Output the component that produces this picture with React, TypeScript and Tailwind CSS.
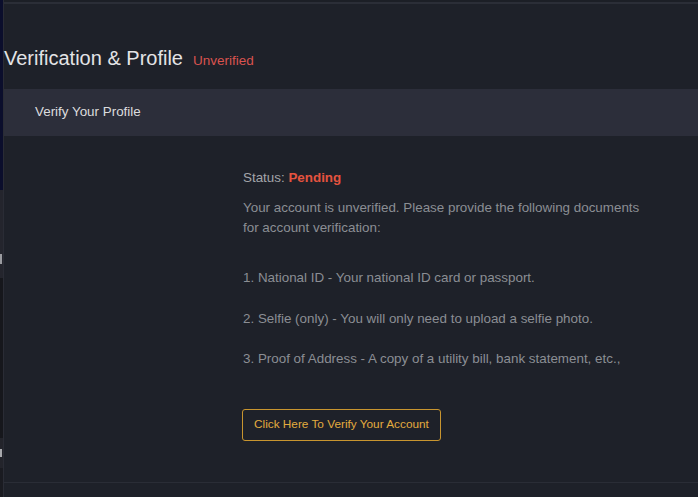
import React from "react";

const font = { fontFamily: '"Liberation Sans", Arial, sans-serif' };

function SideStrip() {
  return (
    <div className="flex w-[4px] shrink-0 flex-col border-r border-[#2a2c35]">
      <div className="h-[190px] bg-[#0b0e2c]" />
      <div className="h-[62px] bg-[#24252d]" />
      <div className="h-[14px] bg-[#24252d] flex items-center">
        <div className="h-[10px] w-[2px] bg-[#9a9ba0]" />
      </div>
      <div className="h-[12px] bg-[#24252d]" />
      <div className="h-[160px] bg-[#16171c]" />
      <div className="h-[30px] bg-[#23242b] flex items-center">
        <div className="h-[8px] w-[2px] bg-[#a8a9ad]" />
      </div>
      <div className="flex-1 bg-[#1a1b21]" />
    </div>
  );
}

export default function App() {
  return (
    <div className="flex h-[497px] w-full overflow-hidden bg-[#1e2129]" style={font}>
      <SideStrip />
      <main className="flex min-w-0 flex-1 flex-col">
        <div className="h-[2px] bg-[#1c1f26]" />
        <div className="h-[2px] bg-[#2b2e37]" />
        <header className="flex h-[85px] items-end pb-[14px]">
          <h1 className="flex items-baseline gap-[10px] text-[20px] leading-[28px] text-[#e4e4e6]">
            Verification &amp; Profile
            <span className="text-[13.5px] text-[#d9534f]">Unverified</span>
          </h1>
        </header>
        <section className="flex flex-1 flex-col">
          <div className="flex h-[47px] items-center bg-[#2c2e3a] pl-[31px] text-[13.4px] text-[#dcdcde]">
            Verify Your Profile
          </div>
          <div className="flex-1 border-b border-[#2a2d36] pl-[239px] pt-[32px] text-[13.4px] text-[#8b8e94]">
            <p className="leading-[20px] text-[#a3a5a9]">
              Status: <span className="font-bold text-[#e5533f]">Pending</span>
            </p>
            <p className="mt-[10px] w-[408px] leading-[20px]">
              Your account is unverified. Please provide the following documents for account verification:
            </p>
            <ol className="mt-[30px] flex flex-col gap-[20.5px] leading-[20px]">
              <li>1. National ID - Your national ID card or passport.</li>
              <li>2. Selfie (only) - You will only need to upload a selfie photo.</li>
              <li>3. Proof of Address - A copy of a utility bill, bank statement, etc.,</li>
            </ol>
            <button className="-ml-px mt-[40px] h-[32px] rounded-[3px] border border-[#c8952f] px-[11px] text-[11.8px] text-[#e3ac3f]">
              Click Here To Verify Your Account
            </button>
          </div>
          <div className="h-[14px]" />
        </section>
      </main>
    </div>
  );
}
